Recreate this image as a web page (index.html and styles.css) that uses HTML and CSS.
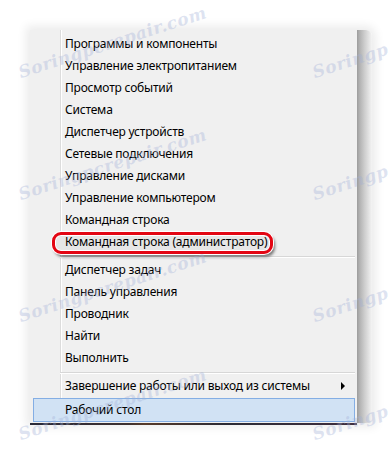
FILE: index.html
```html
<!DOCTYPE html>
<html>
<head>
    <title>Меню Win+X</title>
    <link rel="stylesheet" href="styles.css">
</head>
<body>
    <div class="page">
        <div class="shot">
            <div class="menu">
                <div class="item">Программы и компоненты</div>
                <div class="item">Управление электропитанием</div>
                <div class="item">Просмотр событий</div>
                <div class="item">Система</div>
                <div class="item">Диспетчер устройств</div>
                <div class="item">Сетевые подключения</div>
                <div class="item">Управление дисками</div>
                <div class="item">Управление компьютером</div>
                <div class="item">Командная строка</div>
                <div class="item marked">
                    <span class="ring"></span>
                    <span class="label">Командная строка (администратор)</span>
                </div>
                <div class="sep"></div>
                <div class="item">Диспетчер задач</div>
                <div class="item">Панель управления</div>
                <div class="item">Проводник</div>
                <div class="item">Найти</div>
                <div class="item">Выполнить</div>
                <div class="sep"></div>
                <div class="item sub">Завершение работы или выход из системы <span class="arrow"></span></div>
                <div class="item active">Рабочий стол</div>
            </div>
            <div class="edge"></div>
        </div>
        <div class="taskbar"></div>
    </div>

    <!-- водяные знаки -->
    <div class="wm" style="left: 22px; top: 62px;">Soringpcrepair.com</div>
    <div class="wm" style="left: 316px; top: 62px;">Soringp</div>
    <div class="wm" style="left: 22px; top: 184px;">Soringpcrepair.com</div>
    <div class="wm" style="left: 316px; top: 184px;">Soringp</div>
    <div class="wm" style="left: 22px; top: 306px;">Soringpcrepair.com</div>
    <div class="wm" style="left: 316px; top: 306px;">Soringp</div>
    <div class="wm" style="left: 22px; top: 424px;">Soringpcrepair.com</div>
    <div class="wm" style="left: 316px; top: 424px;">Soringp</div>
</body>
</html>
```

FILE: styles.css
```css
html, body {
    margin: 0;
    background: #fff;
    overflow: hidden;
}
body {
    font-family: 'Noto Sans', 'Open Sans', Arial, sans-serif;
    font-size: 12px;
    letter-spacing: -0.2px;
    color: #000;
    width: 391px;
    height: 457px;
    position: relative;
}
.page {
    padding: 30px 0 0 30px;
}
.shot {
    display: flex;
    width: 342px;
    box-shadow: 0 0 10px 4px rgba(0,0,0,0.08);
    border-radius: 0 6px 0 0;
}
.menu {
    width: 327px;
    box-sizing: border-box;
    padding: 3px 2px 1px 3px;
    background-color: #f0f0f0;
    background-image: linear-gradient(to right, transparent 30px, #dcdcdc 30px, #dcdcdc 31px, #fff 31px, #fff 32px, transparent 32px);
}
.item {
    height: 22px;
    line-height: 22px;
    padding-left: 32px;
    white-space: nowrap;
    position: relative;
}
.sub {
    display: flex;
    align-items: center;
}
.arrow {
    margin-left: auto;
    margin-right: 10px;
    width: 0;
    height: 0;
    border-left: 4px solid #000;
    border-top: 4px solid transparent;
    border-bottom: 4px solid transparent;
}
.active {
    margin-top: 1px;
    height: 22px;
    border: 1px solid #84aee4;
    background: #d1e2f4;
    padding-left: 31px;
}
.sep {
    height: 1px;
    margin: 3px 0 1px 27px;
    background: #d7d7d7;
    border-bottom: 1px solid #fff;
}
.marked .label {
    position: relative;
}
.ring {
    position: absolute;
    left: 19px;
    top: 1px;
    width: 221px;
    height: 22px;
    box-sizing: border-box;
    border: 3px solid #e30613;
    border-radius: 9px;
    background: #e6e6e6;
    box-shadow: inset 0 0 0 1px #fff, 0 0 0 1px #fff, 2px 3px 3px rgba(0,0,0,0.5);
}
.edge {
    width: 15px;
    border-radius: 0 6px 0 0;
    background: linear-gradient(to right, #9c9c9c, #b4b4b4 20%, #cdcdcd 50%, #e4e4e4 80%, #f4f4f4);
}
.taskbar {
    width: 327px;
    height: 2px;
    background: linear-gradient(to right, #2a2a3a, #3c3030 30%, #553a2a 35%, #2a2a35 60%, #403040);
}
.wm {
    position: absolute;
    transform: rotate(-18deg);
    transform-origin: left bottom;
    font-family: 'DejaVu Serif', serif;
    font-style: italic;
    font-weight: bold;
    font-size: 17px;
    color: rgba(160, 175, 215, 0.35);
    white-space: nowrap;
    letter-spacing: 0.5px;
}
```
